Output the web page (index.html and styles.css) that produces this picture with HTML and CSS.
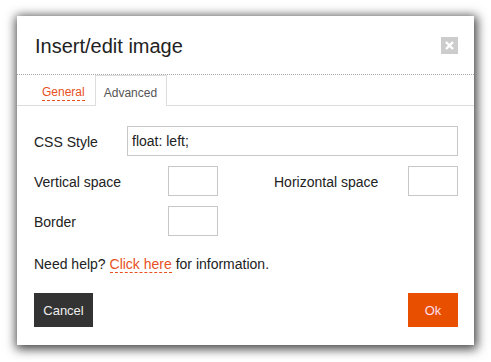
FILE: index.html
```html
<!DOCTYPE html>
<html>
<head>
<meta charset="utf-8">
<link rel="stylesheet" href="styles.css">
</head>
<body>
<div class="dialog">
  <div class="head">
    <div class="title">Insert/edit image</div>
    <div class="close">
      <svg width="17" height="17" viewBox="0 0 17 17"><path d="M5 5 L12 12 M12 5 L5 12" stroke="#fff" stroke-width="2.4" fill="none"/></svg>
    </div>
  </div>
  <div class="tabs">
    <div class="tab"><span class="tab-link">General</span></div>
    <div class="tab active">Advanced</div>
  </div>
  <div class="body">
    <div class="row">
      <label class="lbl lbl-css">CSS Style</label>
      <div class="input wide">float: left;</div>
    </div>
    <div class="row">
      <label class="lbl lbl-wide">Vertical space</label>
      <div class="input small"></div>
      <label class="lbl lbl-h">Horizontal space</label>
      <div class="input small push"></div>
    </div>
    <div class="row">
      <label class="lbl lbl-wide">Border</label>
      <div class="input small"></div>
    </div>
    <p class="help">Need help? <span class="link">Click here</span> for information.</p>
  </div>
  <div class="foot">
    <div class="btn cancel">Cancel</div>
    <div class="btn ok">Ok</div>
  </div>
</div>
</body>
</html>
```

FILE: styles.css
```css
html, body {
  margin: 0;
  padding: 0;
  background: #fff;
}
body {
  padding: 16px 0 17px 17px;
  min-height: 362px;
  box-sizing: border-box;
  font-family: "Liberation Sans", Arial, sans-serif;
  color: #333;
}
.dialog {
  width: 457px;
  height: 329px;
  background: #fff;
  box-shadow: 1px 2px 10px 2px rgba(0, 0, 0, 0.75);
  display: flex;
  flex-direction: column;
  box-sizing: border-box;
}
.head {
  height: 59px;
  border-bottom: 1px dotted #aaa;
  display: flex;
  align-items: center;
  justify-content: space-between;
  padding: 0 16px 0 18px;
  box-sizing: border-box;
  flex: none;
}
.title {
  font-size: 20px;
  color: #222;
  margin-top: 2px;
}
.close {
  width: 17px;
  height: 17px;
  background: #ccc;
  margin-top: 1px;
}
.close svg { display: block; }
.tabs {
  height: 31px;
  box-sizing: border-box;
  border-bottom: 1px solid #ddd;
  display: flex;
  padding-left: 15px;
  flex: none;
}
.tab {
  font-size: 12px;
  padding: 0 9px;
  display: flex;
  align-items: center;
  color: #555;
  box-sizing: border-box;
  height: 31px;
  border: 1px solid transparent;
  border-bottom: none;
  padding-top: 4px;
}
.tab.active {
  border-color: #ddd;
  background: #fff;
  padding: 4px 9px 0 8px;
}
.tab-link {
  color: #e8501e;
  border-bottom: 1px dashed #e8501e;
  padding-bottom: 1px;
}
.body {
  padding: 20px 16px 0 17px;
  flex: 1;
}
.row {
  display: flex;
  align-items: center;
  height: 30px;
  margin-bottom: 10px;
}
.lbl {
  font-size: 14px;
  color: #222;
  padding-top: 1px;
}
.lbl-css { width: 93px; flex: none; }
.lbl-wide { width: 134px; flex: none; }
.lbl-h { margin-left: 56px; }
.input {
  height: 30px;
  box-sizing: border-box;
  border: 1px solid #c8c8c8;
  font-size: 14px;
  color: #222;
  padding: 0 4px;
  display: flex;
  align-items: center;
  background: #fff;
}
.wide { flex: 1; height: 30px; }
.small { width: 50px; flex: none; }
.push { margin-left: auto; }
.help {
  margin: 20px 0 0;
  font-size: 14px;
  color: #222;
}
.link {
  color: #e8501e;
  border-bottom: 1px dashed #e8501e;
}
.foot {
  display: flex;
  justify-content: space-between;
  padding: 0 16px 18px 17px;
  flex: none;
}
.btn {
  height: 34px;
  display: flex;
  align-items: center;
  justify-content: center;
  font-size: 13px;
}
.cancel {
  width: 59px;
  background: #333;
  color: #eee;
}
.ok {
  width: 50px;
  background: #e85000;
  color: #fde;
}
```
